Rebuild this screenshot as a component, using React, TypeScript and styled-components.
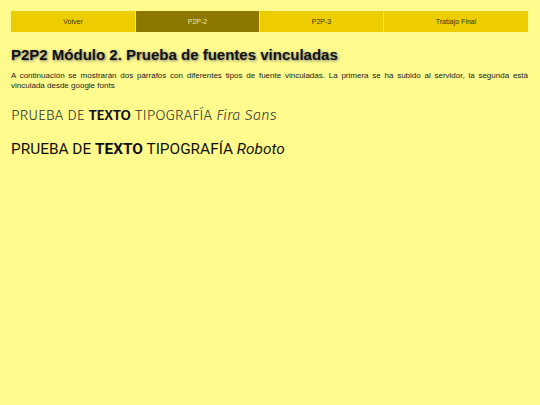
import React from "react";
import styled, { createGlobalStyle } from "styled-components";

const GlobalStyle = createGlobalStyle`
  html, body {
    margin: 0;
    padding: 0;
    background: #fffb8c;
    height: 100%;
  }
  body {
    font-family: "Liberation Sans", Arial, sans-serif;
  }
`;

const Page = styled.div`
  padding: 11px 12px 0 11px;
  background: #fffb8c;
  min-height: 405px;
  box-sizing: border-box;
`;

const Nav = styled.nav`
  display: grid;
  grid-template-columns: 124px 124px 124px 1fr;
  height: 21px;
`;

interface NavItemType {
  active?: boolean;
}

const NavItem = styled.a<NavItemType>`
  display: flex;
  align-items: center;
  justify-content: center;
  background: ${(props) => (props.active ? "#8c7800" : "#eecd00")};
  color: ${(props) => (props.active ? "#f3e9a6" : "#3a3200")};
  font-size: 7px;
  text-decoration: none;
  border-left: 1px solid #f7e060;
  &:first-child {
    border-left: none;
  }
`;

const Title = styled.h1`
  font-size: 15px;
  font-weight: bold;
  color: #111;
  margin: 14px 0 0 0;
  text-shadow: 1px 1px 3px #777;
`;

const Intro = styled.p`
  font-size: 8px;
  line-height: 10px;
  color: #222;
  text-align: justify;
  margin: 8px 0 0 0;
`;

interface SampleType {
  family: string;
  color: string;
  weight: number;
  top: string;
  size: string;
  boldWeight: number;
}

const Sample = styled.p<SampleType>`
  font-family: ${(props) => props.family};
  font-size: ${(props) => props.size};
  font-weight: ${(props) => props.weight};
  color: ${(props) => props.color};
  margin: ${(props) => props.top} 0 0 0;
  b {
    font-weight: ${(props) => props.boldWeight};
    color: #111;
  }
`;

export default function App() {
  return (
    <>
      <GlobalStyle />
      <Page>
        <Nav>
          <NavItem href="#">Volver</NavItem>
          <NavItem href="#" active>P2P-2</NavItem>
          <NavItem href="#">P2P-3</NavItem>
          <NavItem href="#">Trabajo Final</NavItem>
        </Nav>
        <Title>P2P2 Módulo 2. Prueba de fuentes vinculadas</Title>
        <Intro>
          A continuación se mostrarán dos párrafos con diferentes tipos de fuente vinculadas. La primera se ha subido al servidor, la segunda está vinculada desde google fonts
        </Intro>
        <Sample family={`"Fira Sans", "Open Sans", sans-serif`} color="#333" weight={300} top="15px" size="15px" boldWeight={500}>
          PRUEBA DE <b>TEXTO</b> TIPOGRAFÍA <i>Fira Sans</i>
        </Sample>
        <Sample family={`Roboto, sans-serif`} color="#111" weight={400} top="16px" size="15.4px" boldWeight={700}>
          PRUEBA DE <b>TEXTO</b> TIPOGRAFÍA <i>Roboto</i>
        </Sample>
      </Page>
    </>
  );
}
